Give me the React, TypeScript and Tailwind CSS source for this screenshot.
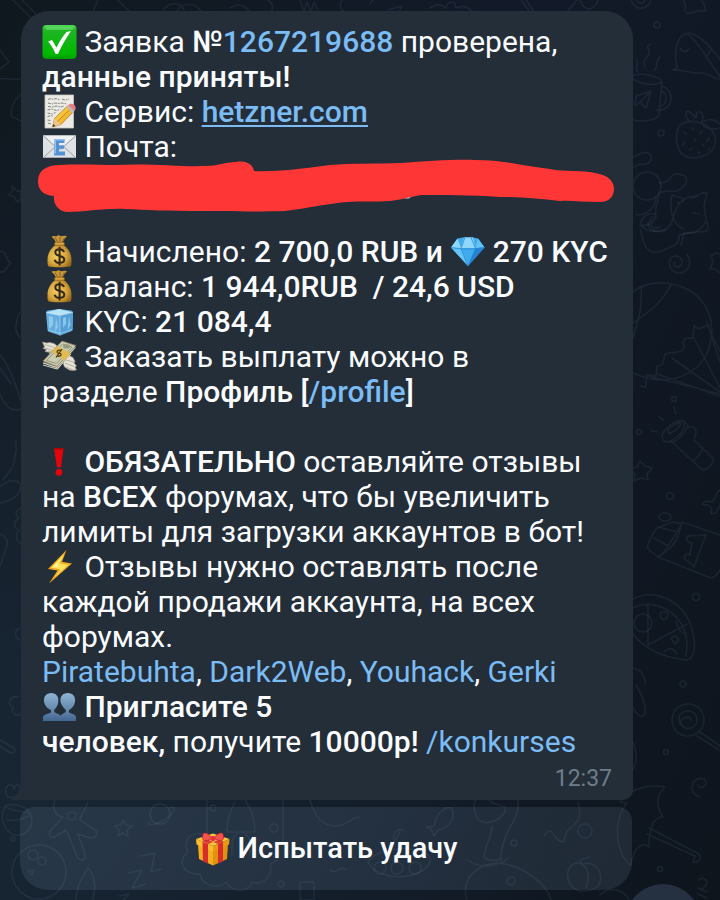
import type { ReactNode } from "react";

function Emoji({ label, children }: { label: string; children: ReactNode }) {
  return (
    <svg
      role="img"
      aria-label={label}
      viewBox="0 0 35 35"
      className="inline-block h-[35px] w-[35px] overflow-visible align-top"
    >
      {children}
    </svg>
  );
}

function CheckMark() {
  return (
    <Emoji label="check mark">
      <defs>
        <linearGradient id="check" x1="0" y1="0" x2="0" y2="1">
          <stop offset="0" stopColor="#4fdb55" />
          <stop offset="0.15" stopColor="#1fb525" />
          <stop offset="0.85" stopColor="#00b800" />
          <stop offset="1" stopColor="#009a00" />
        </linearGradient>
      </defs>
      <rect x="0.5" y="1" width="34" height="34" rx="4" fill="url(#check)" />
      <path d="M3 2.5h29l-1.500 3.500h-26z" fill="#7be67f" opacity="0.5" />
      <path d="M6 17.500l4-1.500 4.500 7.500c3-6 6.500-11.500 10-15.500l4.500-1C24 14 19.500 22 16 30h-2.500C11.500 25 9 20.500 6 17.500z" fill="#fff" />
    </Emoji>
  );
}

function Memo() {
  return (
    <Emoji label="memo">
      <defs>
        <linearGradient id="pencil" x1="0" y1="0" x2="1" y2="1">
          <stop offset="0" stopColor="#ffe45a" />
          <stop offset="1" stopColor="#e89a15" />
        </linearGradient>
      </defs>
      <path d="M3 1h28.500v33H3z" fill="#eceae4" stroke="#c9c8c3" strokeWidth="0.8" />
      <path
        d="M6 5.500l3-1 2 1 3-1 4 1.500M20 5l3 1 4-1M6 9l4 1 3-1 4 .5 3-.5 5 1M6 12.500l5 .5 3-1 5 1 3-1M5.500 16l4-1 5 1.500 4-1M5.500 19l5 1 3-1.500M5.500 22.500l4-1 2 1M5.500 26l3 .5M6 29l3 1"
        stroke="#74736f"
        strokeWidth="0.9"
        strokeDasharray="3 1 1.500 1"
        fill="none"
      />
      <path d="M10.500 33l2-8.500L26 11.500l5.500 6L19 30.500z" fill="url(#pencil)" stroke="#a87213" strokeWidth="0.7" />
      <path d="M10.500 33l2-8.500 6.500 6z" fill="#edc58e" />
      <path d="M10.500 33l.8-3 2.200 2z" fill="#3b3632" />
      <path d="M15.500 27.500L29 14.500" stroke="#c78412" strokeWidth="1" />
      <path d="M24.500 13l1.800-1.700 6 6-1.800 1.800z" fill="#b9bec3" />
      <path d="M26.300 11.300c2-2.300 4.500-1.800 6-.3s2 4 0 6.300z" fill="#ec7b86" />
    </Emoji>
  );
}

function EMail() {
  return (
    <Emoji label="e-mail">
      <rect x="1" y="6.500" width="33" height="22.500" fill="#dfe2e5" />
      <path d="M1 29l13-12M34 29L21 17M1 6.500l14.500 13c1.500 1 2.500 1 4 0L34 6.500" stroke="#939ba1" strokeWidth="1" fill="#eef0f1" />
      <path d="M1 28.500h33" stroke="#a5abb0" />
      <path d="M12.500 10h10v4h-5.500v2.300h5v3.500h-5v2.700h6v4h-11z" fill="#5592d4" />
      <path d="M12.500 10h10v1.500h-8.500v13h-1.500z" fill="#8fc0f0" />
    </Emoji>
  );
}

function MoneyBag() {
  return (
    <Emoji label="money bag">
      <defs>
        <radialGradient id="bag" cx="0.4" cy="0.5" r="0.65">
          <stop offset="0" stopColor="#f2cf64" />
          <stop offset="0.6" stopColor="#d6a53a" />
          <stop offset="1" stopColor="#94651c" />
        </radialGradient>
      </defs>
      <path d="M9.500 3c2-2 3.500-.5 5-.8 1.500-1.500 3-1.300 4 0 2 .6 4-1.600 6.500.3-2.500 2-4 4-4.500 7h-6.500c-.5-3-2-5-4.500-6.500z" fill="#c7983a" />
      <path d="M13 3.500l3 5M18 3v5.500M22.500 3.500L20 8.500" stroke="#886020" strokeWidth="1" />
      <path d="M14 10.500h7c5 3 8.500 9 8.500 15 0 3 .3 5-1 7-4 1-18 1-22 0-1.300-2-1-4-1-7 0-6 3.500-12 8.500-15z" fill="url(#bag)" />
      <rect x="12.500" y="8.300" width="10" height="3" rx="1.500" fill="#d9a43b" stroke="#8a5f1e" strokeWidth="0.7" />
      <path d="M22 18c-.7-2-2.300-2.700-4.500-2.700-2.600 0-4.200 1.200-4.200 3.300 0 4.600 9 2.300 9 7 0 2.200-2 3.300-4.700 3.300-2.600 0-4.300-1-5-3.200M17.600 12.800v18.700" fill="none" stroke="#342713" strokeWidth="2" />
    </Emoji>
  );
}

function IceCube() {
  return (
    <Emoji label="ice cube">
      <path d="M4 8.500Q4 7 6 6.500L17 5l12 1.500q2 .5 2 2l-.5 17q0 1.500-2 2L18 31.500 7.500 28q-2-.5-2-2z" fill="#64addf" />
      <path d="M4 8.500L17 5l14 3.500-13 3z" fill="#b9e4f6" />
      <path d="M18 11.500l13-3-.5 18L18 31.500z" fill="#559fd5" />
      <path d="M7 12l4 1v8l-4 4zM14 14l2 9-3 5M21 14l3-1v7l-3 4zM27 12l1.500 9-3 5" fill="#9dd3f0" opacity="0.75" />
      <path d="M4 8.500l14 3 13-3M18 11.500v20M6 26l12 3.500 12-4" fill="none" stroke="#cdeefa" strokeWidth="1" opacity="0.45" />
    </Emoji>
  );
}

function FlyingMoney() {
  return (
    <Emoji label="money with wings">
      <path d="M.5 3l4 1 3-.5 4.500 1 4 3-4 9-5-1.500 1-1.500-5-1 1.500-2L1 9.500 2.500 8z" fill="#e6e2d5" stroke="#99968b" strokeWidth="0.7" />
      <path d="M2.500 5.500l10 3M3 9l8 2.500M6 12l5 1.500" stroke="#a6a397" strokeWidth="0.8" />
      <path d="M20 21l6-5 5 2.500 2 4-1 1.500 2.500 3-1.500 1 1.500 3-4 .5-3-.5-5-3z" fill="#e6e2d5" stroke="#99968b" strokeWidth="0.7" />
      <path d="M24 21l8 2M23 24l9 3.500M24 28l7 3" stroke="#a6a397" strokeWidth="0.8" />
      <path d="M1 24L20 3l14 5.500-18 22z" fill="#7c7a60" />
      <path d="M1 22L20 2l14 4.500-19 21z" fill="#cbcbb2" stroke="#77765f" strokeWidth="0.8" />
      <path d="M4.500 21.500L20.500 5 30 8 14.500 24.500z" fill="none" stroke="#89886e" strokeWidth="0.8" />
      <path d="M1 24l14 4.500L33 8.500M1 26l14 4 14-15" fill="none" stroke="#e8e6d6" strokeWidth="0.9" />
      <ellipse cx="24.500" cy="7.500" rx="3.500" ry="2.200" fill="#989a82" />
      <path d="M9.500 13l5.500-6 12.500 6.500-.2 3L22 22l-2-2.500z" fill="#e1ba52" />
      <path d="M19 11.500c-2-1.200-4.500.3-3.800 2 .6 1.300 3.300 0 3.800 1.600.5 1.500-2 3-4.300 1.500M20 10l-6 8.500" fill="none" stroke="#4b3c15" strokeWidth="1.300" />
    </Emoji>
  );
}

function Exclamation() {
  return (
    <Emoji label="exclamation mark">
      <path d="M12 4h9.500L19 23.500h-4z" fill="#e2060c" />
      <circle cx="17" cy="28.300" r="3.400" fill="#e2060c" />
      <path d="M12 4h9.500l-.2 1.500h-9z" fill="#a90308" />
    </Emoji>
  );
}

function Lightning() {
  return (
    <Emoji label="high voltage">
      <path d="M24.500 1L6 20l9.500 1.500L7 34.500 30 14.500l-10-1.800z" fill="#f4a51c" />
      <path d="M22.500 4.500L9 18.700l9.500 1.500-6.500 8.500 14.500-13-9-1.500z" fill="#ffe35d" />
      <path d="M21 7l-9.500 10.500 5 .8-.8-4z" fill="#fff2a0" />
    </Emoji>
  );
}

function People() {
  return (
    <Emoji label="people">
      <defs>
        <linearGradient id="people" x1="0" y1="0" x2="0" y2="1">
          <stop offset="0" stopColor="#8eb4d2" />
          <stop offset="0.6" stopColor="#6589ae" />
          <stop offset="1" stopColor="#42668f" />
        </linearGradient>
      </defs>
      <path d="M1 32v-4c1-2.500 5-3 7.500-4.200 1-.8.8-2 0-3C5.500 19.500 2.500 16.500 2 12.500 1.500 7.500 4.500 4 9.200 4S17 7.500 16.300 12.500c-.3 3.500-1.800 6-3.800 8-.7 1.300-.3 2.500.8 3.200 2 1 4.200 1.300 5.200 3 1-1.700 2.500-2 4.200-3 1.300-.7 1.500-2 .7-3.200-2-2-4.300-4.500-4.900-8C17.900 7.500 20.800 4 25.800 4s7.900 3.500 7.200 8.500c-.5 4-2.500 6.500-5.500 8.300-.8 1-1 2.200 0 3C30 25 33.500 25.500 34 28v4z" fill="url(#people)" />
    </Emoji>
  );
}

function Gem() {
  return (
    <Emoji label="gem stone">
      <path d="M7.500 4.500C14 2.700 22 2.700 28 4.500l6.500 9L18 32 1 13.500z" fill="#41abef" />
      <path d="M7.500 4.500L11 14 1 13.500zM14 3.500l9 0L25.500 14H11z" fill="#8fd8fc" />
      <path d="M28 4.500L25.500 14l9-.5zM1 13.500L11 14l7 18z" fill="#65c3f8" />
      <path d="M25.500 14l9-.5L18 32z" fill="#2581d2" />
      <path d="M1 13.500c10 2 23 2 33.500 0M11 14.500L18 32l7.500-17.500L21 3.500M11 14.500L15 3.500" fill="none" stroke="#278bd0" strokeWidth="0.8" />
    </Emoji>
  );
}

function Gift() {
  return (
    <Emoji label="gift">
      <path d="M3 13l15 6v15.500L4 28z" fill="#f4ad1e" />
      <path d="M18 19l15-6-1 15-14 6.500z" fill="#e0920f" />
      <path d="M1 8L18 2.500 34.500 8 18 15z" fill="#f9c63c" />
      <path d="M1 8l17 7v5.500L1.500 13.500z" fill="#fbbb2c" />
      <path d="M34.500 8L18 15v5.500l16-7z" fill="#e79b14" />
      <path d="M7.500 11l5.500 2v19.500L8 30zM28 11l-5 2v19.500l5-2.300z" fill="#d62c2c" />
      <path d="M7 10L26 4.500l4 2L13 13zM28.500 10.500L10 4.500 6.500 6 23 13z" fill="#e23a38" />
      <path d="M17 7.500C14 2 9 1 8 3c-1 2.500-.5 6 1 6.500 2.500.5 5.500-.5 8-2zM19 7.500c3-5.500 8-6.500 9-4.500 1 2.500.5 6-1 6.500-2.500.5-5.500-.5-8-2z" fill="#f4534e" stroke="#b61f26" strokeWidth="0.7" />
      <rect x="15.500" y="5" width="5" height="5" rx="2" fill="#e2343a" />
    </Emoji>
  );
}

function Wallpaper() {
  return (
    <svg
      aria-hidden="true"
      viewBox="0 0 720 900"
      preserveAspectRatio="xMaxYMin slice"
      className="absolute inset-0 h-full w-full"
      fill="none"
      stroke="#8fb0d0"
      strokeOpacity="0.09"
      strokeWidth="1.600"
      strokeLinecap="round"
      strokeLinejoin="round"
    >
      <path d="M13 0l18 18M22 0l16 16M92 14l6-14M118 0l14 14M162 14c4-14 20-12 22-4M175 14c6-12 20-14 28 0M230 8c8-6 18-2 20 6M268 0c6 4 6 10 0 14M300 0l4 12 3-10 4 10 3-10 5 10M342 0c-4 6 0 12 6 14M370 4l4-6M388 10l14-4-4 8M430 8c8-6 14-2 16 0 2-8 10-8 10 0 8-4 14 0 18 6-8 4-14 0-20-2M521 0l9 12M526 0l8 12M565 14l12-14M580 0c4 12 14 12 18 0" />
      <circle cx="641" cy="-2" r="10" />
      <circle cx="641" cy="-1" r="4" />
      <path d="M683 0c6 5-2 12 5 13s8-4 14-2 3-6 0-10" />
      <circle cx="657" cy="25" r="3" />
      <path d="M673 70l4-2c-4-18 0-34 12-35 12 2 24 16 35 32M673 70c14 0 20 4 28 3s12 8 22 6M680 48c3 5 7 4 9 1M688 34c12 10 22 30 34 45M707 56l4-6M651 44c-8 2 2 8-3 12s-4 6-3 12M660 57c-6 4 0 8-6 14M636 60c4 4-3 8 2 12" />
      <path d="M630 76c12-4 30 0 32 6l-3 32c0 6-20 10-30 4M662 82c-10 6-24 0-32-4M661 86c16 4 12 26-4 24M661 91c8 3 6 16-2 15M636 96l15-5-5 17-6-6-5 4zM651 91l-11 11" />
      <path d="M679 126c10-9 30-4 36 10 3 12-6 20-20 22-18 1-22-18-16-32zM690 122c-8-8-3-12 0-10l6 6c0-8 5-8 7-2l-1 7M703 122c5-4 12-3 17 2M703 126c5 4 10 4 17 2" />
      <path d="M684 132l2 2M692 128l2 2M702 131l-2 3M709 138l-2 3M685 142l-2 3M694 139l2 2M702 144l2 2M690 150l2-2M698 152l2 1M708 150l2-2" />
      <circle cx="661" cy="133" r="3" />
      <path d="M630 158c8-2 12-8 20-4 4 6-2 12-10 10l-10 5" />
      <circle cx="647" cy="186" r="14" />
      <path d="M659 183c14 0 8-8 17-9 14 0 13 10 3 16-8 4-14-2-20 4-2 12-5 14-3 24M636 215c14 0 20-10 20-18M640 225c6 8 28 10 32-4s8-22 17-24c10 0 10-5 18-4l-3 12 2 16c-6 12-14 12-22 12l-3 12M682 198l-10-3c-3 14 0 30 12 34M678 203l6-2M692 198l6-2M693 213l6 1M640 225c2-8 8-14 16-10-2 8-8 12-16 10M660 227c-8 4-12-4-8-10" />
      <path d="M641 230c2 18 8 24 18 22 12-5 22-8 20-16 4-4 12-2 18-4s14 4 10-10M648 222c0 8 8 12 18 8M687 254c8 14-4 22-12 18-8-5-7-15 0-16 7 0 9 7 5 10s-7-1-5-4M720 254l-4-1-5 3 2 6-3 7 5 0 5 4" />
      <path d="M633 292c20-16 56-10 71 12 14 20 7 50-6 62-18 18-46 16-65 7M641 286c2 28-6 42-8 52M671 285c-10 18-18 24-38 38M709 325l-11 4-4-4-1 13-7 0-3 4c4 14-8 8-18 12-2 6 0 12-8 12l-1 10-9-1-1 6 0 6-6-1M657 374l62 22M648 376l72 18M672 358l48 34M694 338l26 50M707 322l13 40M708 327l14 28" />
      <circle cx="674" cy="399" r="2.500" />
      <circle cx="639" cy="432" r="2.500" />
      <path d="M674 407l2 7M659 417l4 3M652 431l5 1M662 435c4-8 14-16 22-14 2 8-4 16-16 21-5 0-6-3-6-7zM668 430c4-4 10-8 13-7-1 4-6 8-12 11zM668 442c8 2 16-8 20-16l-4-5M688 428c2-2 8-2 8 4l-2 8 19 18c2 4-6 14-12 11l-29-27M703 448c-2 6-6 10-10 13M640 461l5 5 7 2-5 6 1 6-7-2-7 3 1-7-5-5 7-2z" />
      <circle cx="670" cy="496" r="3.500" />
      <ellipse cx="665" cy="517" rx="6" ry="4" />
      <path d="M720 490c-6 4-4 12-10 12-4-2-8 0-7 3 6-1 10 2 8 9l5-1 4-8M682 522l38 13M658 557l53 21c4 0 6-4 9-8M682 522c-4 18-8 22-12 26l-12 9-10-8c-2-6 10-24 11-22l14-5 9 2-10 16-8 12M659 527l18 5M654 538l14 8M688 536l18-1-4 10-8 22-6-6c-6 0-4-10 2-6l2-12c-6 0-6-6-4-7z" />
      <circle cx="696" cy="597" r="3.500" />
      <path d="M633 599c22-12 56 2 61 40 2 14-3 22-9 21-22-3-40-10-52-26M633 608c20-10 50 2 54 34l-1 15M648 603v42l39-21M661 612c2 0 6-2 7 2l-1 4-4 2-3-4zM671 638l4-2 4 4-4 4zM664 652c6-6 10-3 13 2M676 621c2 8 5 13 10 12" />
      <circle cx="643" cy="623" r="9" />
      <path d="M633 668c8 2 12 8 12 16M636 685c6 10 12 22 8 30-4 4-8-2-11-8" />
      <circle cx="683" cy="684" r="3" />
      <circle cx="688" cy="720" r="16" />
      <path d="M700 732l20 14M697 736l22 14M680 724c-6-14 14-18 17-6 1 12-14 14-16 5 0-6 8-8 10-3" />
      <circle cx="666" cy="752" r="2.500" />
      <path d="M700 797c-14-4-8-22 4-18 6 6-4 12-6 6M633 742c4 10 4 20 0 28" />
      <path d="M620 802c8-14 32-18 45-15-8 8-10 18-2 30-8 0-14 8-14 30-6-6-16 0-18 18-14-8-20-42-4-62zM649 828l50 26c4 4-2 10-6 8l2-6-48-22" />
      <circle cx="660" cy="869" r="2.500" />
      <path d="M699 880c4-4 10 0 7 5l-5 5M698 888l9 4M698 894l9 4" />
      <path d="M0 50l9 12-9 7M0 79c8-2 14 2 20 0M20 95c-8 8-10 16-8 22l9 4M12 186l5 5 4 0v8l-4 3-3-5-6-2 5-4zM0 252c6-4 6 10 11 11-5 4-5 10-11 9M20 312c-6 12-5 20 0 26M0 355c6 6 14 24 21 46M0 368l11 16M0 395c8 16 14 16 21 14M16 440v12l-3 14M3 480l9-12M0 487c8-8 18-8 21-2 0 10-10 16-21 18M21 508c-6 2-6 8-2 10-6 4-6 10 0 12-4 4-3 12 2 14M0 534c10 4 8 10 4 20l-4 12M20 628c-6 2-6 10 0 12M18 697c-8-2-12 8-5 10-2 6 3 10 8 7M0 740l14 8c3 4-2 6-5 4l-9-6" />
      <path d="M8 797c-8-12 6-16 6-8 2-8 8-3 6 3-2 6-6 6-12 5zM5 806c-8 18 4 30 14 29 12-1 16-14 10-24-8-6-16-8-24-5zM5 806c6 6 14 4 24 7M7 820c8 2 16-2 22-4" />
      <circle cx="13" cy="839" r="2" />
      <circle cx="39" cy="872" r="27" />
      <circle cx="33" cy="855" r="5" />
      <circle cx="42" cy="861" r="4" />
      <path d="M28 871l6-1-2 5zM55 799c-4 12 3 18 8 18l-13 14c-2 6 2 8 6 5l10-6 12 28c4 4 8 2 7-4l-7-20 12 4c8 0 8-6 4-9l-14-9c0-6 6-10 8-18" />
      <circle cx="72" cy="816" r="4" />
      <circle cx="160" cy="814" r="10" />
      <path d="M150 822c-6 4 4 4 14-2s14-16 6-12M123 820l3 5 6 1-5 4 1 6-5-3-5 3 1-6-4-4 6-1zM76 900c0-18 10-28 12-32 8 8 8 24 4 32M141 856l14-3-4 19 10-3M128 873l14-3-10 18 14-4M119 896l10-2-8 8" />
      <path d="M207 800v36c-14-8-26 4-19 16-12 8-4 24 12 22 2 12 18 16 26 8 8 12 22 10 26 0 12 4 22-8 18-18 12-4 10-16 4-20M235 802c-4 8-8 16-8 30h28c0-14-4-24-10-32M232 855v-14c4-12 14-12 18 0v14M283 800v42M300 890v-8h14v18h-14zM310 800c6 20 14 26 26 26s18-12 24-8M330 870c6 6 10-6 16 0" />
      <circle cx="274" cy="828" r="4" />
      <circle cx="213" cy="808" r="3" />
      <circle cx="281" cy="884" r="3" />
      <path d="M434 826c2-12 10-20 18-18 4 12-4 20-14 22l-4 6-3-7-5-2zM394 840c-2-8 4-12 10-10M400 832l-8 14M368 862c6-14 54-20 62-4 2 20-50 28-62 4z" />
      <circle cx="380" cy="868" r="6" />
      <circle cx="397" cy="868" r="6" />
      <circle cx="415" cy="868" r="6" />
      <path d="M475 812c-4-14 6-20 16-10 6 4 16 2 14 10-10 14-28 14-30 0zM518 800c0 28-10 16-18 58M492 826c0 12-8 20-8 32 8 4 16 3 18 0M468 860c10 8 30 8 40-2M467 900c-8-26 18-40 38-36s42 20 46 36M578 802c8 28-14 20-14 40-12 0-10-20-20-6" />
      <circle cx="585" cy="831" r="7" />
      <circle cx="514" cy="843" r="3" />
      <circle cx="511" cy="881" r="4" />
      <path d="M582 864c-8-4-16 4-14 14 4 18 24 14 30 8 6-8 2-26-16-22zM582 864c-4-8 6-4 8-8M582 864c8 6 8 14 4 24M600 895c8-8 20-8 30 5" />
    </svg>
  );
}

function Redaction() {
  return (
    <span className="relative block h-[35px]">
      <svg
        role="img"
        aria-label="hidden address"
        viewBox="38 159 577 54"
        className="absolute top-[-5px] left-[-4px] h-[54px] w-[577px]"
      >
        <path
          d="M38 181C38 171 46 165 60 165C80 164 100 165 115 165C150 163 180 167 205 166C218 166 225 162 236 162C247 160 253 165 254 171C275 172 300 169 330 165C350 163 380 164 400 163C430 161 455 159 475 160C505 160 525 166 550 169C565 172 582 170 595 173C608 175 614 181 614 189C614 197 608 203 598 202C583 202 570 200 560 201C540 199 525 197 500 197C470 195 445 195 421 195C410 197 405 199 390 201C375 202 360 201 348 202C330 203 310 208 285 211C255 212 220 211 200 211C170 211 145 210 125 209C105 208 85 212 67 212C58 211 53 204 54 196C43 195 38 190 38 181Z"
          fill="#ff3636"
        />
        <path d="M404 198.500l7-1.500-2 1.500z" fill="#c9d4e4" />
      </svg>
    </span>
  );
}

function Link({ children, className = "" }: { children: ReactNode; className?: string }) {
  return (
    <a href="#" className={`text-[#7cbcf5] ${className}`}>
      {children}
    </a>
  );
}

function Bold({ children }: { children: ReactNode }) {
  return <b className="font-medium">{children}</b>;
}

export default function App() {
  return (
    <main className="relative min-h-screen overflow-hidden bg-[linear-gradient(115deg,#10181f_0%,#121a29_45%,#0e151d_100%)] font-[Roboto,sans-serif] text-[#fafcff]">
      <div className="absolute inset-0 bg-[radial-gradient(ellipse_at_0%_85%,#182633_0%,transparent_60%)]" />
      <Wallpaper />
      <div className="absolute right-[19px] bottom-[-60px] h-[76px] w-[76px] rounded-full bg-[#253140]" />

      <div className="relative mr-[87px] ml-[21px] pt-[11px]">
        <article className="relative rounded-t-[28px] rounded-br-[10px] bg-[#232e39] px-[21px] pt-[13px] pb-2">
          <svg aria-hidden="true" viewBox="0 0 10 24" className="absolute bottom-0 left-[-10px] h-6 w-[10px]">
            <path d="M10 0C10 12 7 19 1 22C0 23 0 24 2 24H10Z" fill="#232e39" />
          </svg>
          <p className="text-[30px] leading-[35px]">
            <CheckMark /> Заявка <Bold>№<Link>1267219688</Link></Bold> проверена,
            <br />
            <Bold>данные приняты!</Bold>
            <br />
            <Memo /> Сервис:{" "}
            <Bold>
              <Link className="underline decoration-2 underline-offset-3">hetzner.com</Link>
            </Bold>
            <br />
            <EMail /> Почта:
            <Redaction />
            <br />
            <MoneyBag /> Начислено: <Bold>2 700,0 RUB и <Gem /> 270 KYC</Bold>
            <br />
            <MoneyBag /> Баланс: <Bold>1 944,0RUB&nbsp; / 24,6 USD</Bold>
            <br />
            <IceCube /> KYC: <Bold>21 084,4</Bold>
            <br />
            <FlyingMoney /> Заказать выплату можно в
            <br />
            разделе <Bold>Профиль [<Link>/profile</Link>]</Bold>
            <br />
            <br />
            <Exclamation /> <Bold>ОБЯЗАТЕЛЬНО</Bold> оставляйте отзывы
            <br />
            на <Bold>ВСЕХ</Bold> форумах, что бы увеличить
            <br />
            лимиты для загрузки аккаунтов в бот!
            <br />
            <Lightning /> Отзывы нужно оставлять после
            <br />
            каждой продажи аккаунта, на всех
            <br />
            форумах.
            <br />
            <Link>Piratebuhta</Link>, <Link>Dark2Web</Link>, <Link>Youhack</Link>, <Link>Gerki</Link>
            <br />
            <People /> <Bold>Пригласите 5</Bold>
            <br />
            <Bold>человек,</Bold> получите <Bold>10000р!</Bold> <Link>/konkurses</Link>
          </p>
          <time className="mt-[7px] block text-right text-[23px] leading-[26px] text-[#6f7d8a]">12:37</time>
        </article>

        <button
          type="button"
          className="mt-[7px] -ml-px flex h-[83px] w-full items-center justify-center gap-2 rounded-t-[14px] rounded-b-[28px] bg-[#a0c0e0]/12 text-[29px] leading-[35px] font-medium"
        >
          <Gift />
          <span>Испытать удачу</span>
        </button>
      </div>
    </main>
  );
}
